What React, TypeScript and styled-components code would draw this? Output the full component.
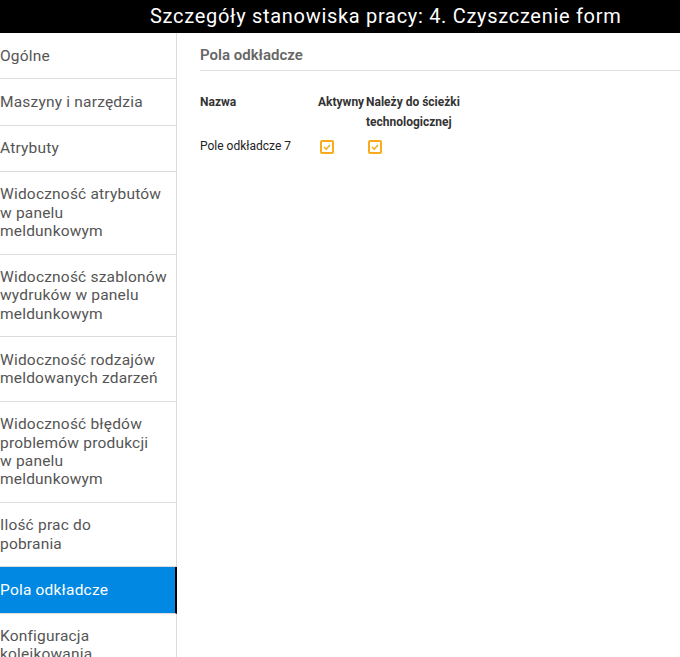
import styled, { createGlobalStyle } from 'styled-components';

const GlobalStyle = createGlobalStyle`
  html, body {
    margin: 0;
    padding: 0;
    background: #fff;
    font-family: "Roboto", "Liberation Sans", sans-serif;
  }
  * { box-sizing: border-box; }
`;

const Page = styled.div`
  width: 680px;
  height: 657px;
  overflow: hidden;
  display: flex;
  flex-direction: column;
`;

const Header = styled.div`
  height: 33px;
  background: #000;
  color: #fff;
  font-size: 20px;
  letter-spacing: 0.7px;
  line-height: 33px;
  padding-left: 150px;
  white-space: nowrap;
  flex-shrink: 0;
`;

const Body = styled.div`
  flex: 1;
  display: flex;
  min-height: 0;
`;

const Sidebar = styled.nav`
  width: 177px;
  flex-shrink: 0;
  border-right: 1px solid #dcdcdc;
  display: flex;
  flex-direction: column;
`;

const NavItem = styled.div<{ $active?: boolean }>`
  padding: 13.5px 10px 13.5px 0;
  line-height: 18.25px;
  font-size: 15.5px;
  letter-spacing: 0.2px;
  color: ${p => (p.$active ? '#fff' : '#555')};
  background: ${p => (p.$active ? '#0088e2' : 'transparent')};
  border-bottom: 1px solid #dcdcdc;
  margin-right: ${p => (p.$active ? '-1px' : '0')};
  border-right: ${p => (p.$active ? '2px solid #000' : 'none')};
  flex-shrink: 0;
`;

const NavLine = styled.span`
  display: block;
  white-space: nowrap;
`;

const Content = styled.main`
  flex: 1;
  padding: 12px 0 0 23px;
`;

const SectionTitle = styled.h2`
  margin: 0;
  font-size: 15px;
  font-weight: 600;
  color: #666;
  line-height: 20px;
  padding-bottom: 5px;
  border-bottom: 1px solid #e2e2e2;
`;

const Table = styled.table`
  margin-top: 21px;
  border-collapse: collapse;
`;

const Th = styled.th<{ $width: number }>`
  width: ${p => p.$width}px;
  text-align: left;
  vertical-align: top;
  font-size: 12px;
  font-weight: 700;
  color: #333;
  line-height: 20px;
  padding: 0;
`;

const Td = styled.td`
  font-size: 12px;
  color: #222;
  padding: 4px 0 0 0;
  line-height: 20px;
  vertical-align: middle;
`;

const Check = styled.span`
  display: inline-flex;
  align-items: center;
  justify-content: center;
  width: 14px;
  height: 14px;
  border: 2px solid #f8ac1c;
  border-radius: 2px;
  margin-left: 2px;
  vertical-align: middle;
`;

const CheckBox = () => (
  <Check>
    <svg width="10" height="10" viewBox="0 0 10 10">
      <path d="M2 5.2 L4.2 7.2 L8 3" fill="none" stroke="#f8ac1c" strokeWidth="1.6" />
    </svg>
  </Check>
);

const items: { lines: string[]; active?: boolean }[] = [
  { lines: ['Ogólne'] },
  { lines: ['Maszyny i narzędzia'] },
  { lines: ['Atrybuty'] },
  { lines: ['Widoczność atrybutów', 'w panelu', 'meldunkowym'] },
  { lines: ['Widoczność szablonów', 'wydruków w panelu', 'meldunkowym'] },
  { lines: ['Widoczność rodzajów', 'meldowanych zdarzeń'] },
  { lines: ['Widoczność błędów', 'problemów produkcji', 'w panelu', 'meldunkowym'] },
  { lines: ['Ilość prac do', 'pobrania'] },
  { lines: ['Pola odkładcze'], active: true },
  { lines: ['Konfiguracja', 'kolejkowania'] },
];

export default function App() {
  return (
    <Page>
      <GlobalStyle />
      <Header>Szczegóły stanowiska pracy: 4. Czyszczenie form</Header>
      <Body>
        <Sidebar>
          {items.map(i => (
            <NavItem key={i.lines.join(' ')} $active={i.active}>
              {i.lines.map(l => (
                <NavLine key={l}>{l}</NavLine>
              ))}
            </NavItem>
          ))}
        </Sidebar>
        <Content>
          <SectionTitle>Pola odkładcze</SectionTitle>
          <Table>
            <thead>
              <tr>
                <Th $width={118}>Nazwa</Th>
                <Th $width={48}>Aktywny</Th>
                <Th $width={110}>Należy do ścieżki technologicznej</Th>
              </tr>
            </thead>
            <tbody>
              <tr>
                <Td>Pole odkładcze 7</Td>
                <Td><CheckBox /></Td>
                <Td><CheckBox /></Td>
              </tr>
            </tbody>
          </Table>
        </Content>
      </Body>
    </Page>
  );
}
